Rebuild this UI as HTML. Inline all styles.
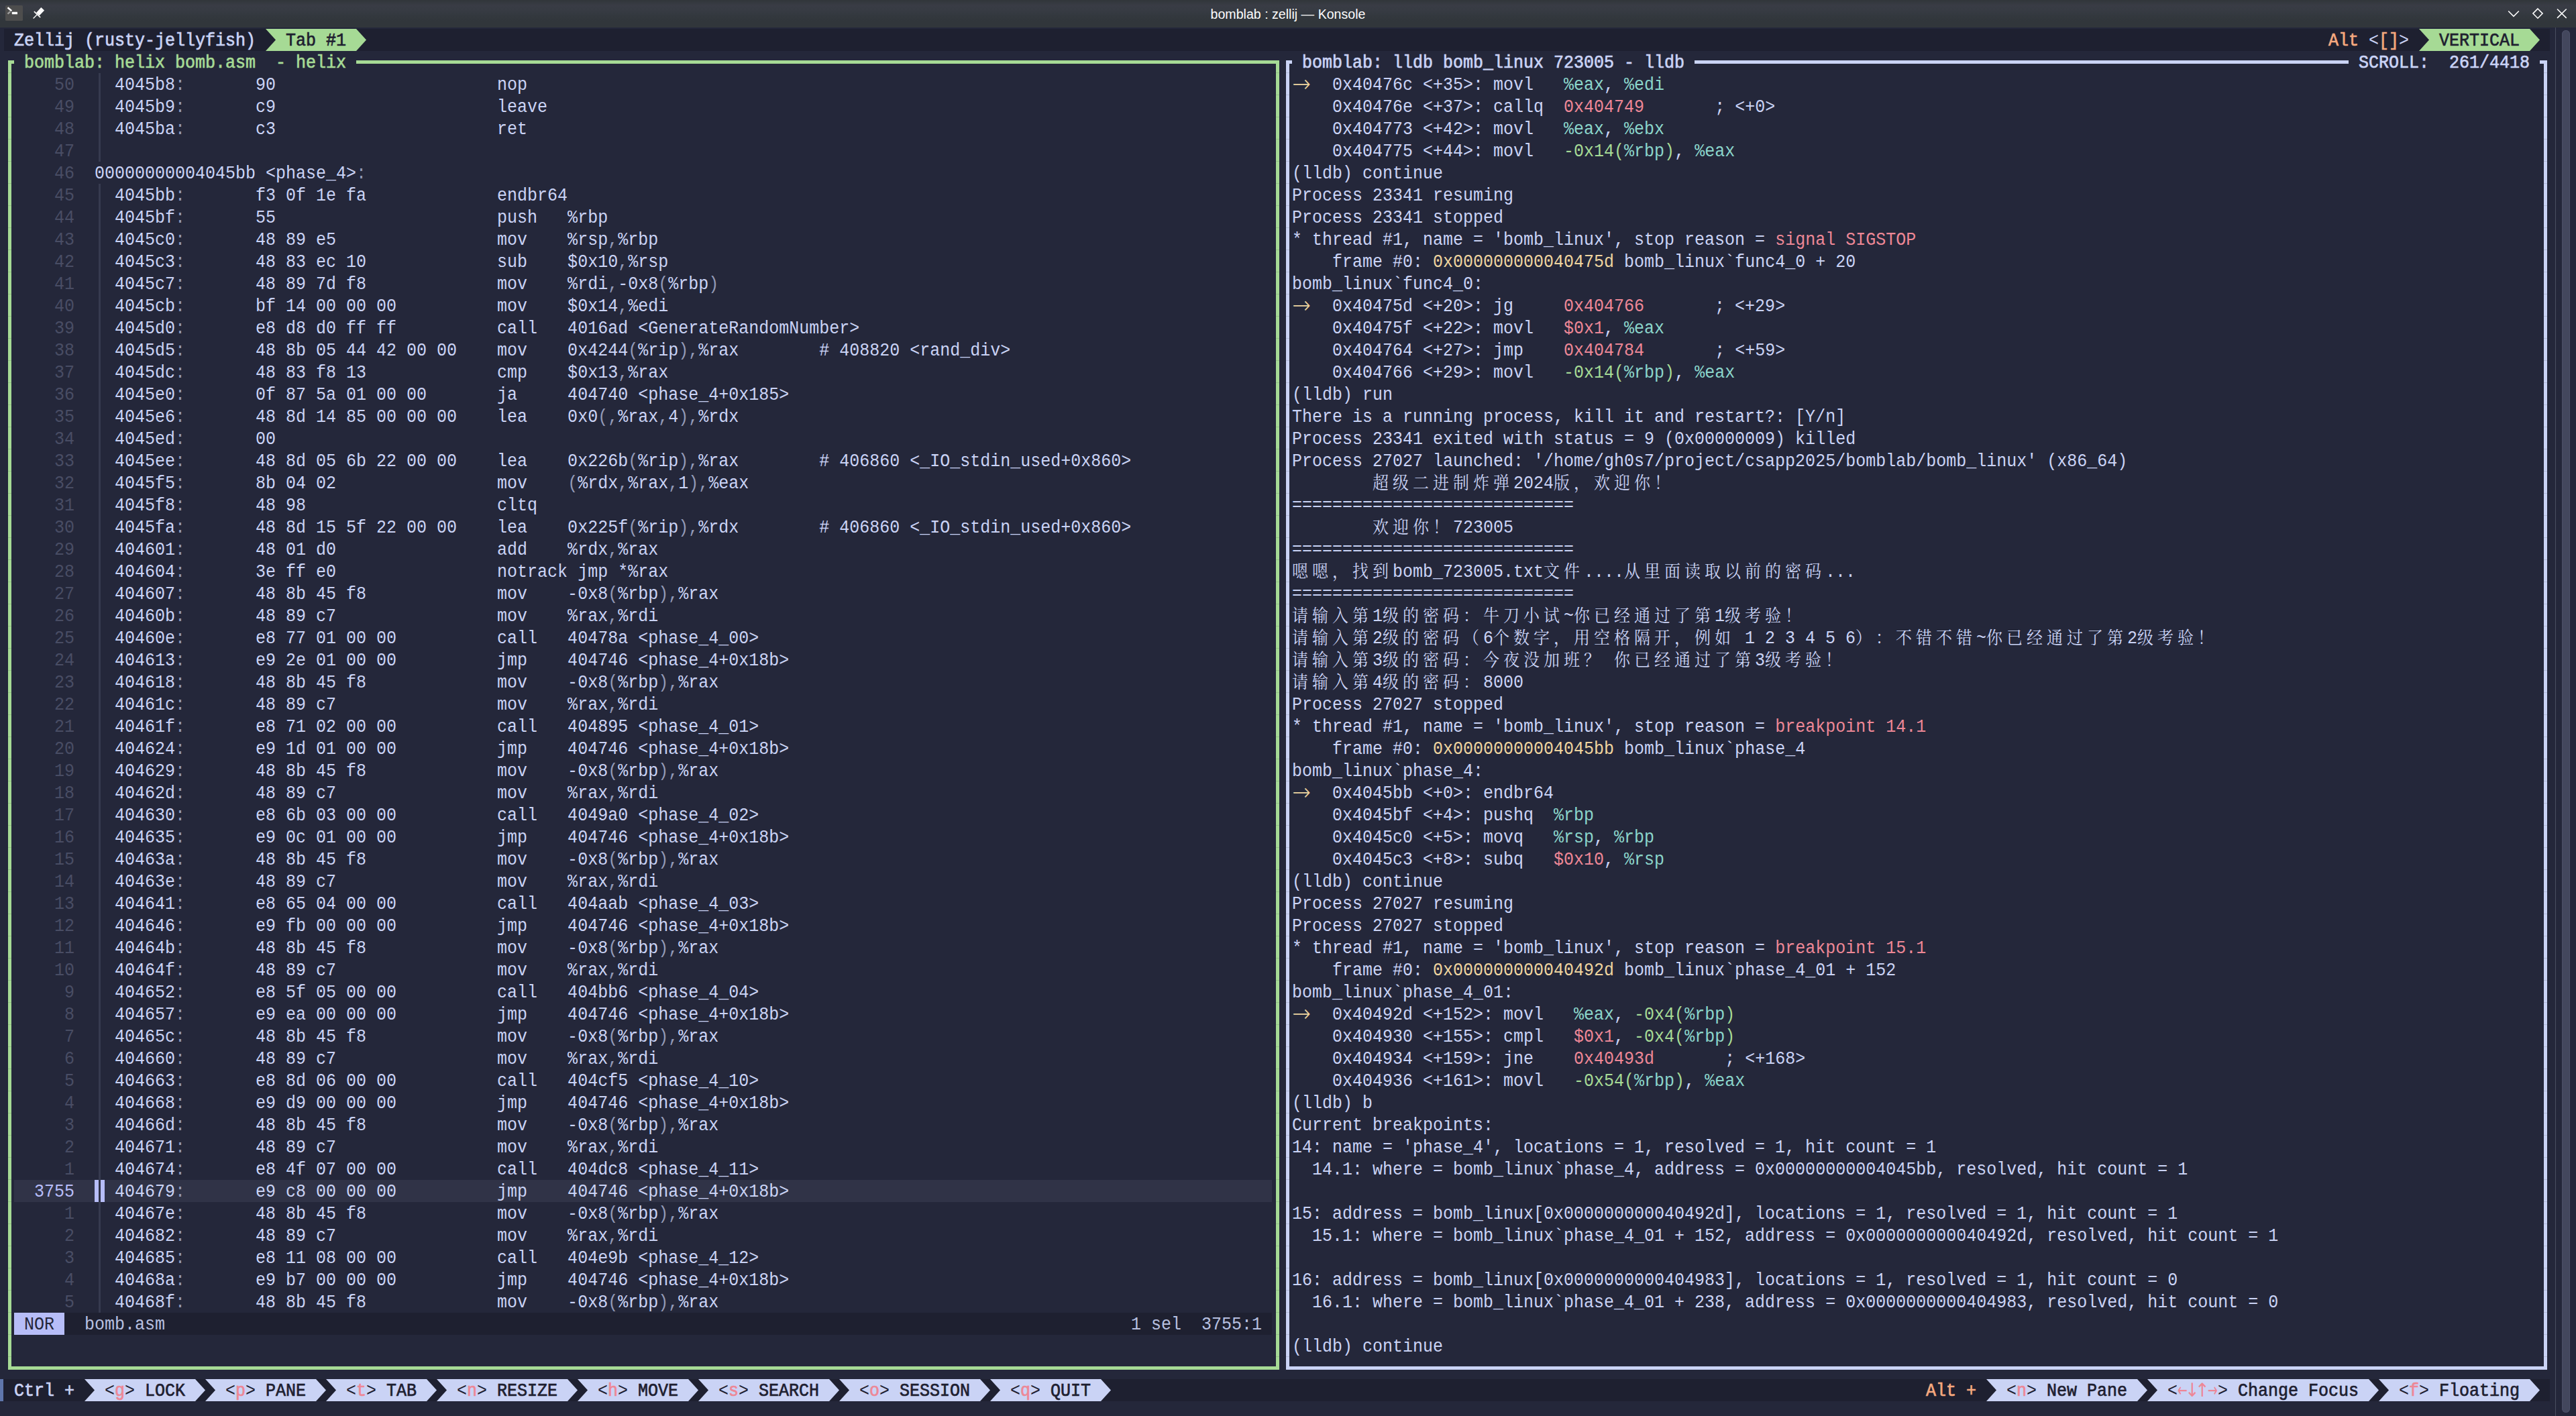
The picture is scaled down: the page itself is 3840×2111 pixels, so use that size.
<!DOCTYPE html>
<html lang="zh"><head><meta charset="utf-8"><title>bomblab : zellij — Konsole</title>
<style>
html,body{margin:0;padding:0;background:#24273a;}
body{width:3840px;height:2111px;overflow:hidden;position:relative;font-family:"Liberation Mono","Noto Serif CJK SC",monospace;}
#tb{position:absolute;left:0;top:0;width:3840px;height:41px;background:linear-gradient(#31363a 0,#393c45 8px,#373b43 16px,#33383e 24px,#31363b 31px,#31363b 100%);}
#tb svg{position:absolute;top:0}
#sep{position:absolute;left:3809px;top:41px;width:1px;height:2070px;background:#4a4e60}
#sb{position:absolute;left:3819px;top:45px;width:12px;height:2061px;border-radius:6px;background:#43475d;box-shadow:inset 0 0 0 1px #4c5068}
#mk{position:absolute;left:0;top:2056px;width:5px;height:33px;background:#5f76ab}
#tb .t{position:absolute;left:0;right:0;top:0;height:41px;line-height:41px;text-align:center;color:#fcfcfc;font:19.6px/43px "Liberation Sans",sans-serif;}
#term{position:absolute;left:6px;top:43px;width:3795px;height:2046px;color:#cad3f5;font-size:25px;}
.r{position:absolute;height:33px;line-height:33px;white-space:pre;transform:translateY(1px) scaleY(1.08);transform-origin:0 16.5px;}
.b{position:absolute;}
.B{font-weight:normal;-webkit-text-stroke:.65px currentColor}
.dk{color:#1e2030}.dk2{color:#24273a}
.gr{color:#a6da95}.g2{color:#a6da95}.re{color:#ed8796}.pe{color:#f5a97f}.ye{color:#eed49f}.te{color:#8bd5ca}
.ln{color:#494d64}.lnc{color:#b7bdf8}.pu{color:#939ab7}.st{color:#b8c0e0}
.ar{color:#eed49f;display:inline-block;width:30px;font:200 33px/33px "DejaVu Sans",sans-serif;vertical-align:top;text-align:center;position:relative;top:-2px;left:-1px}
.ah,.av{font-family:"DejaVu Sans",sans-serif;display:inline-block;width:15px;text-align:center;vertical-align:top;line-height:33px;font-weight:normal;text-indent:-4px}
.ah{font-size:26px;text-indent:-3.4px;transform:scaleX(.68);position:relative;top:-1px}.av{font-size:26px;position:relative;top:-1px}
i.w{display:inline-block;width:30px;font-style:normal;font-size:24px;text-align:left;line-height:33px;vertical-align:top;position:relative;top:1px;}
</style></head><body>
<div id="tb"><div class="t">bomblab : zellij — Konsole</div>
<svg style="left:0" width="90" height="41" viewBox="0 0 90 41">
<rect x="8" y="8" width="26" height="23" rx="1.5" fill="#4d4d4d"/>
<path d="M11.5 11.3 L17.3 16.3" stroke="#fcfcfc" stroke-width="2.5" fill="none"/>
<path d="M15.2 17.3 L11.5 20.7" stroke="#a0a0a0" stroke-width="2.3" fill="none"/>
<rect x="17.8" y="17.7" width="8.2" height="3.6" rx="0.5" fill="#fcfcfc"/>
<path d="M61.3 10.9 L66.1 15.4 L58.7 23.2 L54.0 18.9 Z" fill="#fcfcfc"/>
<path d="M50.9 17.2 L60.2 26.0" stroke="#fcfcfc" stroke-width="1.7" fill="none"/>
<path d="M55.5 21.6 L49.6 27.4" stroke="#fcfcfc" stroke-width="1.4" fill="none"/>
</svg>
<svg style="left:3730px" width="110" height="41" viewBox="3730 0 110 41" fill="none" stroke="#fcfcfc" stroke-width="1.6">
<path d="M3739.2 16.5 L3747 24.3 L3754.8 16.5"/>
<path d="M3783 13 L3790.1 20.1 L3783 27.2 L3775.9 20.1 Z"/>
<path d="M3812 13.5 L3825.7 26.9 M3825.7 13.5 L3812 26.9"/>
</svg>
</div>
<div id="sep"></div><div id="sb"></div><div id="mk"></div>
<div id="term">
<div class="b" style="left:0px;top:0px;width:3795px;height:33px;background:#1e2030;"></div>
<div class="r " style="top:0px;left:0px"><span class="B"> Zellij (rusty-jellyfish) </span></div>
<div class="b" style="left:390px;top:0px;width:15px;height:33px;background:#a6da95;"></div>
<div class="b" style="left:390px;top:0px;width:15px;height:33px;background:#1e2030;clip-path:polygon(0 0,100% 50%,0 100%)"></div>
<div class="b" style="left:405px;top:0px;width:120px;height:33px;background:#a6da95;"></div>
<div class="r " style="top:0px;left:405px"><span class="B dk"> Tab #1 </span></div>
<div class="b" style="left:525px;top:0px;width:15px;height:33px;background:#1e2030;"></div>
<div class="b" style="left:525px;top:0px;width:15px;height:33px;background:#a6da95;clip-path:polygon(0 0,100% 50%,0 100%)"></div>
<div class="r " style="top:0px;left:3465px"><span class="B pe">Alt</span> &lt;<span class="B pe">[]</span>&gt;</div>
<div class="b" style="left:3600px;top:0px;width:15px;height:33px;background:#a6da95;"></div>
<div class="b" style="left:3600px;top:0px;width:15px;height:33px;background:#1e2030;clip-path:polygon(0 0,100% 50%,0 100%)"></div>
<div class="b" style="left:3615px;top:0px;width:150px;height:33px;background:#a6da95;"></div>
<div class="r " style="top:0px;left:3615px"><span class="B dk"> VERTICAL </span></div>
<div class="b" style="left:3765px;top:0px;width:15px;height:33px;background:#1e2030;"></div>
<div class="b" style="left:3765px;top:0px;width:15px;height:33px;background:#a6da95;clip-path:polygon(0 0,100% 50%,0 100%)"></div>
<div class="b" style="left:6px;top:47px;width:5px;height:1952px;background:repeating-linear-gradient(to bottom,#a6da95 0,#a6da95 18px,#95c486 18px,#95c486 19px,#a6da95 19px,#a6da95 33px);"></div>
<div class="b" style="left:1896px;top:47px;width:5px;height:1952px;background:repeating-linear-gradient(to bottom,#a6da95 0,#a6da95 18px,#95c486 18px,#95c486 19px,#a6da95 19px,#a6da95 33px);"></div>
<div class="b" style="left:6px;top:47px;width:9px;height:5px;background:#a6da95;"></div>
<div class="b" style="left:525px;top:47px;width:1376px;height:5px;background:#a6da95;"></div>
<div class="b" style="left:6px;top:1994px;width:1895px;height:5px;background:#a6da95;"></div>
<div class="r " style="top:33px;left:30px"><span class="B gr">bomblab: helix bomb.asm  - helix</span></div>
<div class="b" style="left:1911px;top:47px;width:5px;height:1952px;background:repeating-linear-gradient(to bottom,#cad3f5 0,#cad3f5 18px,#b5bddc 18px,#b5bddc 19px,#cad3f5 19px,#cad3f5 33px);"></div>
<div class="b" style="left:3786px;top:47px;width:5px;height:1952px;background:repeating-linear-gradient(to bottom,#cad3f5 0,#cad3f5 18px,#b5bddc 18px,#b5bddc 19px,#cad3f5 19px,#cad3f5 33px);"></div>
<div class="b" style="left:1911px;top:47px;width:9px;height:5px;background:#cad3f5;"></div>
<div class="b" style="left:2520px;top:47px;width:975px;height:5px;background:#cad3f5;"></div>
<div class="b" style="left:3780px;top:47px;width:11px;height:5px;background:#cad3f5;"></div>
<div class="b" style="left:1911px;top:1994px;width:1880px;height:5px;background:#cad3f5;"></div>
<div class="r " style="top:33px;left:1935px"><span class="B">bomblab: lldb bomb_linux 723005 - lldb</span></div>
<div class="r " style="top:33px;left:3510px"><span class="B">SCROLL:  261/4418</span></div>
<div class="r " style="top:66px;left:75px"><span class="ln">50</span></div>
<div class="b" style="left:141px;top:66px;width:3px;height:33px;background:#363a4f;"></div>
<div class="r " style="top:66px;left:165px">4045b8<span class="pu">:</span>       90                      nop</div>
<div class="r " style="top:99px;left:75px"><span class="ln">49</span></div>
<div class="b" style="left:141px;top:99px;width:3px;height:33px;background:#363a4f;"></div>
<div class="r " style="top:99px;left:165px">4045b9<span class="pu">:</span>       c9                      leave</div>
<div class="r " style="top:132px;left:75px"><span class="ln">48</span></div>
<div class="b" style="left:141px;top:132px;width:3px;height:33px;background:#363a4f;"></div>
<div class="r " style="top:132px;left:165px">4045ba<span class="pu">:</span>       c3                      ret</div>
<div class="r " style="top:165px;left:75px"><span class="ln">47</span></div>
<div class="b" style="left:141px;top:165px;width:3px;height:33px;background:#363a4f;"></div>
<div class="r " style="top:198px;left:75px"><span class="ln">46</span></div>
<div class="r " style="top:198px;left:135px">00000000004045bb &lt;phase_4&gt;<span class="pu">:</span></div>
<div class="r " style="top:231px;left:75px"><span class="ln">45</span></div>
<div class="b" style="left:141px;top:231px;width:3px;height:33px;background:#363a4f;"></div>
<div class="r " style="top:231px;left:165px">4045bb<span class="pu">:</span>       f3 0f 1e fa             endbr64</div>
<div class="r " style="top:264px;left:75px"><span class="ln">44</span></div>
<div class="b" style="left:141px;top:264px;width:3px;height:33px;background:#363a4f;"></div>
<div class="r " style="top:264px;left:165px">4045bf<span class="pu">:</span>       55                      push   %rbp</div>
<div class="r " style="top:297px;left:75px"><span class="ln">43</span></div>
<div class="b" style="left:141px;top:297px;width:3px;height:33px;background:#363a4f;"></div>
<div class="r " style="top:297px;left:165px">4045c0<span class="pu">:</span>       48 89 e5                mov    %rsp<span class="pu">,</span>%rbp</div>
<div class="r " style="top:330px;left:75px"><span class="ln">42</span></div>
<div class="b" style="left:141px;top:330px;width:3px;height:33px;background:#363a4f;"></div>
<div class="r " style="top:330px;left:165px">4045c3<span class="pu">:</span>       48 83 ec 10             sub    $0x10<span class="pu">,</span>%rsp</div>
<div class="r " style="top:363px;left:75px"><span class="ln">41</span></div>
<div class="b" style="left:141px;top:363px;width:3px;height:33px;background:#363a4f;"></div>
<div class="r " style="top:363px;left:165px">4045c7<span class="pu">:</span>       48 89 7d f8             mov    %rdi<span class="pu">,</span>-0x8<span class="pu">(</span>%rbp<span class="pu">)</span></div>
<div class="r " style="top:396px;left:75px"><span class="ln">40</span></div>
<div class="b" style="left:141px;top:396px;width:3px;height:33px;background:#363a4f;"></div>
<div class="r " style="top:396px;left:165px">4045cb<span class="pu">:</span>       bf 14 00 00 00          mov    $0x14<span class="pu">,</span>%edi</div>
<div class="r " style="top:429px;left:75px"><span class="ln">39</span></div>
<div class="b" style="left:141px;top:429px;width:3px;height:33px;background:#363a4f;"></div>
<div class="r " style="top:429px;left:165px">4045d0<span class="pu">:</span>       e8 d8 d0 ff ff          call   4016ad &lt;GenerateRandomNumber&gt;</div>
<div class="r " style="top:462px;left:75px"><span class="ln">38</span></div>
<div class="b" style="left:141px;top:462px;width:3px;height:33px;background:#363a4f;"></div>
<div class="r " style="top:462px;left:165px">4045d5<span class="pu">:</span>       48 8b 05 44 42 00 00    mov    0x4244<span class="pu">(</span>%rip<span class="pu">)</span><span class="pu">,</span>%rax        # 408820 &lt;rand_div&gt;</div>
<div class="r " style="top:495px;left:75px"><span class="ln">37</span></div>
<div class="b" style="left:141px;top:495px;width:3px;height:33px;background:#363a4f;"></div>
<div class="r " style="top:495px;left:165px">4045dc<span class="pu">:</span>       48 83 f8 13             cmp    $0x13<span class="pu">,</span>%rax</div>
<div class="r " style="top:528px;left:75px"><span class="ln">36</span></div>
<div class="b" style="left:141px;top:528px;width:3px;height:33px;background:#363a4f;"></div>
<div class="r " style="top:528px;left:165px">4045e0<span class="pu">:</span>       0f 87 5a 01 00 00       ja     404740 &lt;phase_4+0x185&gt;</div>
<div class="r " style="top:561px;left:75px"><span class="ln">35</span></div>
<div class="b" style="left:141px;top:561px;width:3px;height:33px;background:#363a4f;"></div>
<div class="r " style="top:561px;left:165px">4045e6<span class="pu">:</span>       48 8d 14 85 00 00 00    lea    0x0<span class="pu">(</span><span class="pu">,</span>%rax<span class="pu">,</span>4<span class="pu">)</span><span class="pu">,</span>%rdx</div>
<div class="r " style="top:594px;left:75px"><span class="ln">34</span></div>
<div class="b" style="left:141px;top:594px;width:3px;height:33px;background:#363a4f;"></div>
<div class="r " style="top:594px;left:165px">4045ed<span class="pu">:</span>       00</div>
<div class="r " style="top:627px;left:75px"><span class="ln">33</span></div>
<div class="b" style="left:141px;top:627px;width:3px;height:33px;background:#363a4f;"></div>
<div class="r " style="top:627px;left:165px">4045ee<span class="pu">:</span>       48 8d 05 6b 22 00 00    lea    0x226b<span class="pu">(</span>%rip<span class="pu">)</span><span class="pu">,</span>%rax        # 406860 &lt;_IO_stdin_used+0x860&gt;</div>
<div class="r " style="top:660px;left:75px"><span class="ln">32</span></div>
<div class="b" style="left:141px;top:660px;width:3px;height:33px;background:#363a4f;"></div>
<div class="r " style="top:660px;left:165px">4045f5<span class="pu">:</span>       8b 04 02                mov    <span class="pu">(</span>%rdx<span class="pu">,</span>%rax<span class="pu">,</span>1<span class="pu">)</span><span class="pu">,</span>%eax</div>
<div class="r " style="top:693px;left:75px"><span class="ln">31</span></div>
<div class="b" style="left:141px;top:693px;width:3px;height:33px;background:#363a4f;"></div>
<div class="r " style="top:693px;left:165px">4045f8<span class="pu">:</span>       48 98                   cltq</div>
<div class="r " style="top:726px;left:75px"><span class="ln">30</span></div>
<div class="b" style="left:141px;top:726px;width:3px;height:33px;background:#363a4f;"></div>
<div class="r " style="top:726px;left:165px">4045fa<span class="pu">:</span>       48 8d 15 5f 22 00 00    lea    0x225f<span class="pu">(</span>%rip<span class="pu">)</span><span class="pu">,</span>%rdx        # 406860 &lt;_IO_stdin_used+0x860&gt;</div>
<div class="r " style="top:759px;left:75px"><span class="ln">29</span></div>
<div class="b" style="left:141px;top:759px;width:3px;height:33px;background:#363a4f;"></div>
<div class="r " style="top:759px;left:165px">404601<span class="pu">:</span>       48 01 d0                add    %rdx<span class="pu">,</span>%rax</div>
<div class="r " style="top:792px;left:75px"><span class="ln">28</span></div>
<div class="b" style="left:141px;top:792px;width:3px;height:33px;background:#363a4f;"></div>
<div class="r " style="top:792px;left:165px">404604<span class="pu">:</span>       3e ff e0                notrack jmp *%rax</div>
<div class="r " style="top:825px;left:75px"><span class="ln">27</span></div>
<div class="b" style="left:141px;top:825px;width:3px;height:33px;background:#363a4f;"></div>
<div class="r " style="top:825px;left:165px">404607<span class="pu">:</span>       48 8b 45 f8             mov    -0x8<span class="pu">(</span>%rbp<span class="pu">)</span><span class="pu">,</span>%rax</div>
<div class="r " style="top:858px;left:75px"><span class="ln">26</span></div>
<div class="b" style="left:141px;top:858px;width:3px;height:33px;background:#363a4f;"></div>
<div class="r " style="top:858px;left:165px">40460b<span class="pu">:</span>       48 89 c7                mov    %rax<span class="pu">,</span>%rdi</div>
<div class="r " style="top:891px;left:75px"><span class="ln">25</span></div>
<div class="b" style="left:141px;top:891px;width:3px;height:33px;background:#363a4f;"></div>
<div class="r " style="top:891px;left:165px">40460e<span class="pu">:</span>       e8 77 01 00 00          call   40478a &lt;phase_4_00&gt;</div>
<div class="r " style="top:924px;left:75px"><span class="ln">24</span></div>
<div class="b" style="left:141px;top:924px;width:3px;height:33px;background:#363a4f;"></div>
<div class="r " style="top:924px;left:165px">404613<span class="pu">:</span>       e9 2e 01 00 00          jmp    404746 &lt;phase_4+0x18b&gt;</div>
<div class="r " style="top:957px;left:75px"><span class="ln">23</span></div>
<div class="b" style="left:141px;top:957px;width:3px;height:33px;background:#363a4f;"></div>
<div class="r " style="top:957px;left:165px">404618<span class="pu">:</span>       48 8b 45 f8             mov    -0x8<span class="pu">(</span>%rbp<span class="pu">)</span><span class="pu">,</span>%rax</div>
<div class="r " style="top:990px;left:75px"><span class="ln">22</span></div>
<div class="b" style="left:141px;top:990px;width:3px;height:33px;background:#363a4f;"></div>
<div class="r " style="top:990px;left:165px">40461c<span class="pu">:</span>       48 89 c7                mov    %rax<span class="pu">,</span>%rdi</div>
<div class="r " style="top:1023px;left:75px"><span class="ln">21</span></div>
<div class="b" style="left:141px;top:1023px;width:3px;height:33px;background:#363a4f;"></div>
<div class="r " style="top:1023px;left:165px">40461f<span class="pu">:</span>       e8 71 02 00 00          call   404895 &lt;phase_4_01&gt;</div>
<div class="r " style="top:1056px;left:75px"><span class="ln">20</span></div>
<div class="b" style="left:141px;top:1056px;width:3px;height:33px;background:#363a4f;"></div>
<div class="r " style="top:1056px;left:165px">404624<span class="pu">:</span>       e9 1d 01 00 00          jmp    404746 &lt;phase_4+0x18b&gt;</div>
<div class="r " style="top:1089px;left:75px"><span class="ln">19</span></div>
<div class="b" style="left:141px;top:1089px;width:3px;height:33px;background:#363a4f;"></div>
<div class="r " style="top:1089px;left:165px">404629<span class="pu">:</span>       48 8b 45 f8             mov    -0x8<span class="pu">(</span>%rbp<span class="pu">)</span><span class="pu">,</span>%rax</div>
<div class="r " style="top:1122px;left:75px"><span class="ln">18</span></div>
<div class="b" style="left:141px;top:1122px;width:3px;height:33px;background:#363a4f;"></div>
<div class="r " style="top:1122px;left:165px">40462d<span class="pu">:</span>       48 89 c7                mov    %rax<span class="pu">,</span>%rdi</div>
<div class="r " style="top:1155px;left:75px"><span class="ln">17</span></div>
<div class="b" style="left:141px;top:1155px;width:3px;height:33px;background:#363a4f;"></div>
<div class="r " style="top:1155px;left:165px">404630<span class="pu">:</span>       e8 6b 03 00 00          call   4049a0 &lt;phase_4_02&gt;</div>
<div class="r " style="top:1188px;left:75px"><span class="ln">16</span></div>
<div class="b" style="left:141px;top:1188px;width:3px;height:33px;background:#363a4f;"></div>
<div class="r " style="top:1188px;left:165px">404635<span class="pu">:</span>       e9 0c 01 00 00          jmp    404746 &lt;phase_4+0x18b&gt;</div>
<div class="r " style="top:1221px;left:75px"><span class="ln">15</span></div>
<div class="b" style="left:141px;top:1221px;width:3px;height:33px;background:#363a4f;"></div>
<div class="r " style="top:1221px;left:165px">40463a<span class="pu">:</span>       48 8b 45 f8             mov    -0x8<span class="pu">(</span>%rbp<span class="pu">)</span><span class="pu">,</span>%rax</div>
<div class="r " style="top:1254px;left:75px"><span class="ln">14</span></div>
<div class="b" style="left:141px;top:1254px;width:3px;height:33px;background:#363a4f;"></div>
<div class="r " style="top:1254px;left:165px">40463e<span class="pu">:</span>       48 89 c7                mov    %rax<span class="pu">,</span>%rdi</div>
<div class="r " style="top:1287px;left:75px"><span class="ln">13</span></div>
<div class="b" style="left:141px;top:1287px;width:3px;height:33px;background:#363a4f;"></div>
<div class="r " style="top:1287px;left:165px">404641<span class="pu">:</span>       e8 65 04 00 00          call   404aab &lt;phase_4_03&gt;</div>
<div class="r " style="top:1320px;left:75px"><span class="ln">12</span></div>
<div class="b" style="left:141px;top:1320px;width:3px;height:33px;background:#363a4f;"></div>
<div class="r " style="top:1320px;left:165px">404646<span class="pu">:</span>       e9 fb 00 00 00          jmp    404746 &lt;phase_4+0x18b&gt;</div>
<div class="r " style="top:1353px;left:75px"><span class="ln">11</span></div>
<div class="b" style="left:141px;top:1353px;width:3px;height:33px;background:#363a4f;"></div>
<div class="r " style="top:1353px;left:165px">40464b<span class="pu">:</span>       48 8b 45 f8             mov    -0x8<span class="pu">(</span>%rbp<span class="pu">)</span><span class="pu">,</span>%rax</div>
<div class="r " style="top:1386px;left:75px"><span class="ln">10</span></div>
<div class="b" style="left:141px;top:1386px;width:3px;height:33px;background:#363a4f;"></div>
<div class="r " style="top:1386px;left:165px">40464f<span class="pu">:</span>       48 89 c7                mov    %rax<span class="pu">,</span>%rdi</div>
<div class="r " style="top:1419px;left:90px"><span class="ln">9</span></div>
<div class="b" style="left:141px;top:1419px;width:3px;height:33px;background:#363a4f;"></div>
<div class="r " style="top:1419px;left:165px">404652<span class="pu">:</span>       e8 5f 05 00 00          call   404bb6 &lt;phase_4_04&gt;</div>
<div class="r " style="top:1452px;left:90px"><span class="ln">8</span></div>
<div class="b" style="left:141px;top:1452px;width:3px;height:33px;background:#363a4f;"></div>
<div class="r " style="top:1452px;left:165px">404657<span class="pu">:</span>       e9 ea 00 00 00          jmp    404746 &lt;phase_4+0x18b&gt;</div>
<div class="r " style="top:1485px;left:90px"><span class="ln">7</span></div>
<div class="b" style="left:141px;top:1485px;width:3px;height:33px;background:#363a4f;"></div>
<div class="r " style="top:1485px;left:165px">40465c<span class="pu">:</span>       48 8b 45 f8             mov    -0x8<span class="pu">(</span>%rbp<span class="pu">)</span><span class="pu">,</span>%rax</div>
<div class="r " style="top:1518px;left:90px"><span class="ln">6</span></div>
<div class="b" style="left:141px;top:1518px;width:3px;height:33px;background:#363a4f;"></div>
<div class="r " style="top:1518px;left:165px">404660<span class="pu">:</span>       48 89 c7                mov    %rax<span class="pu">,</span>%rdi</div>
<div class="r " style="top:1551px;left:90px"><span class="ln">5</span></div>
<div class="b" style="left:141px;top:1551px;width:3px;height:33px;background:#363a4f;"></div>
<div class="r " style="top:1551px;left:165px">404663<span class="pu">:</span>       e8 8d 06 00 00          call   404cf5 &lt;phase_4_10&gt;</div>
<div class="r " style="top:1584px;left:90px"><span class="ln">4</span></div>
<div class="b" style="left:141px;top:1584px;width:3px;height:33px;background:#363a4f;"></div>
<div class="r " style="top:1584px;left:165px">404668<span class="pu">:</span>       e9 d9 00 00 00          jmp    404746 &lt;phase_4+0x18b&gt;</div>
<div class="r " style="top:1617px;left:90px"><span class="ln">3</span></div>
<div class="b" style="left:141px;top:1617px;width:3px;height:33px;background:#363a4f;"></div>
<div class="r " style="top:1617px;left:165px">40466d<span class="pu">:</span>       48 8b 45 f8             mov    -0x8<span class="pu">(</span>%rbp<span class="pu">)</span><span class="pu">,</span>%rax</div>
<div class="r " style="top:1650px;left:90px"><span class="ln">2</span></div>
<div class="b" style="left:141px;top:1650px;width:3px;height:33px;background:#363a4f;"></div>
<div class="r " style="top:1650px;left:165px">404671<span class="pu">:</span>       48 89 c7                mov    %rax<span class="pu">,</span>%rdi</div>
<div class="r " style="top:1683px;left:90px"><span class="ln">1</span></div>
<div class="b" style="left:141px;top:1683px;width:3px;height:33px;background:#363a4f;"></div>
<div class="r " style="top:1683px;left:165px">404674<span class="pu">:</span>       e8 4f 07 00 00          call   404dc8 &lt;phase_4_11&gt;</div>
<div class="b" style="left:15px;top:1716px;width:1875px;height:33px;background:#303347;"></div>
<div class="b" style="left:135px;top:1716px;width:15px;height:33px;background:#b7bdf8;"></div>
<div class="r " style="top:1716px;left:45px"><span class="lnc">3755</span></div>
<div class="b" style="left:141px;top:1716px;width:3px;height:33px;background:#303347;"></div>
<div class="r " style="top:1716px;left:165px">404679<span class="pu">:</span>       e9 c8 00 00 00          jmp    404746 &lt;phase_4+0x18b&gt;</div>
<div class="r " style="top:1749px;left:90px"><span class="ln">1</span></div>
<div class="b" style="left:141px;top:1749px;width:3px;height:33px;background:#363a4f;"></div>
<div class="r " style="top:1749px;left:165px">40467e<span class="pu">:</span>       48 8b 45 f8             mov    -0x8<span class="pu">(</span>%rbp<span class="pu">)</span><span class="pu">,</span>%rax</div>
<div class="r " style="top:1782px;left:90px"><span class="ln">2</span></div>
<div class="b" style="left:141px;top:1782px;width:3px;height:33px;background:#363a4f;"></div>
<div class="r " style="top:1782px;left:165px">404682<span class="pu">:</span>       48 89 c7                mov    %rax<span class="pu">,</span>%rdi</div>
<div class="r " style="top:1815px;left:90px"><span class="ln">3</span></div>
<div class="b" style="left:141px;top:1815px;width:3px;height:33px;background:#363a4f;"></div>
<div class="r " style="top:1815px;left:165px">404685<span class="pu">:</span>       e8 11 08 00 00          call   404e9b &lt;phase_4_12&gt;</div>
<div class="r " style="top:1848px;left:90px"><span class="ln">4</span></div>
<div class="b" style="left:141px;top:1848px;width:3px;height:33px;background:#363a4f;"></div>
<div class="r " style="top:1848px;left:165px">40468a<span class="pu">:</span>       e9 b7 00 00 00          jmp    404746 &lt;phase_4+0x18b&gt;</div>
<div class="r " style="top:1881px;left:90px"><span class="ln">5</span></div>
<div class="b" style="left:141px;top:1881px;width:3px;height:33px;background:#363a4f;"></div>
<div class="r " style="top:1881px;left:165px">40468f<span class="pu">:</span>       48 8b 45 f8             mov    -0x8<span class="pu">(</span>%rbp<span class="pu">)</span><span class="pu">,</span>%rax</div>
<div class="b" style="left:15px;top:1914px;width:1875px;height:33px;background:#1e2030;"></div>
<div class="b" style="left:15px;top:1914px;width:75px;height:33px;background:#b7bdf8;"></div>
<div class="r " style="top:1914px;left:15px"><span class="dk2"> NOR </span></div>
<div class="r " style="top:1914px;left:120px"><span class="st">bomb.asm</span></div>
<div class="r " style="top:1914px;left:1680px"><span class="st">1 sel  3755:1</span></div>
<div class="r " style="top:66px;left:1920px"><span class="ar">→</span>  0x40476c &lt;+35&gt;: movl   <span class="te">%eax</span>, <span class="te">%edi</span></div>
<div class="r " style="top:99px;left:1920px">    0x40476e &lt;+37&gt;: callq  <span class="re">0x404749</span>       ; &lt;+0&gt;</div>
<div class="r " style="top:132px;left:1920px">    0x404773 &lt;+42&gt;: movl   <span class="te">%eax</span>, <span class="te">%ebx</span></div>
<div class="r " style="top:165px;left:1920px">    0x404775 &lt;+44&gt;: movl   <span class="g2">-0x14(</span><span class="te">%rbp</span><span class="g2">)</span>, <span class="te">%eax</span></div>
<div class="r " style="top:198px;left:1920px">(lldb) continue</div>
<div class="r " style="top:231px;left:1920px">Process 23341 resuming</div>
<div class="r " style="top:264px;left:1920px">Process 23341 stopped</div>
<div class="r " style="top:297px;left:1920px">* thread #1, name = 'bomb_linux', stop reason = <span class="re">signal SIGSTOP</span></div>
<div class="r " style="top:330px;left:1920px">    frame #0: <span class="ye">0x000000000040475d</span> bomb_linux`func4_0 + 20</div>
<div class="r " style="top:363px;left:1920px">bomb_linux`func4_0:</div>
<div class="r " style="top:396px;left:1920px"><span class="ar">→</span>  0x40475d &lt;+20&gt;: jg     <span class="re">0x404766</span>       ; &lt;+29&gt;</div>
<div class="r " style="top:429px;left:1920px">    0x40475f &lt;+22&gt;: movl   <span class="re">$0x1</span>, <span class="te">%eax</span></div>
<div class="r " style="top:462px;left:1920px">    0x404764 &lt;+27&gt;: jmp    <span class="re">0x404784</span>       ; &lt;+59&gt;</div>
<div class="r " style="top:495px;left:1920px">    0x404766 &lt;+29&gt;: movl   <span class="g2">-0x14(</span><span class="te">%rbp</span><span class="g2">)</span>, <span class="te">%eax</span></div>
<div class="r " style="top:528px;left:1920px">(lldb) run</div>
<div class="r " style="top:561px;left:1920px">There is a running process, kill it and restart?: [Y/n] </div>
<div class="r " style="top:594px;left:1920px">Process 23341 exited with status = 9 (0x00000009) killed</div>
<div class="r " style="top:627px;left:1920px">Process 27027 launched: '/home/gh0s7/project/csapp2025/bomblab/bomb_linux' (x86_64)</div>
<div class="r " style="top:660px;left:1920px">        <i class="w">超</i><i class="w">级</i><i class="w">二</i><i class="w">进</i><i class="w">制</i><i class="w">炸</i><i class="w">弹</i>2024<i class="w">版</i><i class="w">，</i><i class="w">欢</i><i class="w">迎</i><i class="w">你</i><i class="w">！</i></div>
<div class="r " style="top:693px;left:1920px">============================</div>
<div class="r " style="top:726px;left:1920px">        <i class="w">欢</i><i class="w">迎</i><i class="w">你</i><i class="w">！</i>723005</div>
<div class="r " style="top:759px;left:1920px">============================</div>
<div class="r " style="top:792px;left:1920px"><i class="w">嗯</i><i class="w">嗯</i><i class="w">，</i><i class="w">找</i><i class="w">到</i>bomb_723005.txt<i class="w">文</i><i class="w">件</i>....<i class="w">从</i><i class="w">里</i><i class="w">面</i><i class="w">读</i><i class="w">取</i><i class="w">以</i><i class="w">前</i><i class="w">的</i><i class="w">密</i><i class="w">码</i>...</div>
<div class="r " style="top:825px;left:1920px">============================</div>
<div class="r " style="top:858px;left:1920px"><i class="w">请</i><i class="w">输</i><i class="w">入</i><i class="w">第</i>1<i class="w">级</i><i class="w">的</i><i class="w">密</i><i class="w">码</i><i class="w">：</i><i class="w">牛</i><i class="w">刀</i><i class="w">小</i><i class="w">试</i>~<i class="w">你</i><i class="w">已</i><i class="w">经</i><i class="w">通</i><i class="w">过</i><i class="w">了</i><i class="w">第</i>1<i class="w">级</i><i class="w">考</i><i class="w">验</i><i class="w">！</i></div>
<div class="r " style="top:891px;left:1920px"><i class="w">请</i><i class="w">输</i><i class="w">入</i><i class="w">第</i>2<i class="w">级</i><i class="w">的</i><i class="w">密</i><i class="w">码</i><i class="w">（</i>6<i class="w">个</i><i class="w">数</i><i class="w">字</i><i class="w">，</i><i class="w">用</i><i class="w">空</i><i class="w">格</i><i class="w">隔</i><i class="w">开</i><i class="w">，</i><i class="w">例</i><i class="w">如</i> 1 2 3 4 5 6<i class="w">）</i><i class="w">：</i><i class="w">不</i><i class="w">错</i><i class="w">不</i><i class="w">错</i>~<i class="w">你</i><i class="w">已</i><i class="w">经</i><i class="w">通</i><i class="w">过</i><i class="w">了</i><i class="w">第</i>2<i class="w">级</i><i class="w">考</i><i class="w">验</i><i class="w">！</i></div>
<div class="r " style="top:924px;left:1920px"><i class="w">请</i><i class="w">输</i><i class="w">入</i><i class="w">第</i>3<i class="w">级</i><i class="w">的</i><i class="w">密</i><i class="w">码</i><i class="w">：</i><i class="w">今</i><i class="w">夜</i><i class="w">没</i><i class="w">加</i><i class="w">班</i><i class="w">？</i> <i class="w">你</i><i class="w">已</i><i class="w">经</i><i class="w">通</i><i class="w">过</i><i class="w">了</i><i class="w">第</i>3<i class="w">级</i><i class="w">考</i><i class="w">验</i><i class="w">！</i></div>
<div class="r " style="top:957px;left:1920px"><i class="w">请</i><i class="w">输</i><i class="w">入</i><i class="w">第</i>4<i class="w">级</i><i class="w">的</i><i class="w">密</i><i class="w">码</i><i class="w">：</i>8000</div>
<div class="r " style="top:990px;left:1920px">Process 27027 stopped</div>
<div class="r " style="top:1023px;left:1920px">* thread #1, name = 'bomb_linux', stop reason = <span class="re">breakpoint 14.1</span></div>
<div class="r " style="top:1056px;left:1920px">    frame #0: <span class="ye">0x00000000004045bb</span> bomb_linux`phase_4</div>
<div class="r " style="top:1089px;left:1920px">bomb_linux`phase_4:</div>
<div class="r " style="top:1122px;left:1920px"><span class="ar">→</span>  0x4045bb &lt;+0&gt;: endbr64</div>
<div class="r " style="top:1155px;left:1920px">    0x4045bf &lt;+4&gt;: pushq  <span class="te">%rbp</span></div>
<div class="r " style="top:1188px;left:1920px">    0x4045c0 &lt;+5&gt;: movq   <span class="te">%rsp</span>, <span class="te">%rbp</span></div>
<div class="r " style="top:1221px;left:1920px">    0x4045c3 &lt;+8&gt;: subq   <span class="re">$0x10</span>, <span class="te">%rsp</span></div>
<div class="r " style="top:1254px;left:1920px">(lldb) continue</div>
<div class="r " style="top:1287px;left:1920px">Process 27027 resuming</div>
<div class="r " style="top:1320px;left:1920px">Process 27027 stopped</div>
<div class="r " style="top:1353px;left:1920px">* thread #1, name = 'bomb_linux', stop reason = <span class="re">breakpoint 15.1</span></div>
<div class="r " style="top:1386px;left:1920px">    frame #0: <span class="ye">0x000000000040492d</span> bomb_linux`phase_4_01 + 152</div>
<div class="r " style="top:1419px;left:1920px">bomb_linux`phase_4_01:</div>
<div class="r " style="top:1452px;left:1920px"><span class="ar">→</span>  0x40492d &lt;+152&gt;: movl   <span class="te">%eax</span>, <span class="g2">-0x4(</span><span class="te">%rbp</span><span class="g2">)</span></div>
<div class="r " style="top:1485px;left:1920px">    0x404930 &lt;+155&gt;: cmpl   <span class="re">$0x1</span>, <span class="g2">-0x4(</span><span class="te">%rbp</span><span class="g2">)</span></div>
<div class="r " style="top:1518px;left:1920px">    0x404934 &lt;+159&gt;: jne    <span class="re">0x40493d</span>       ; &lt;+168&gt;</div>
<div class="r " style="top:1551px;left:1920px">    0x404936 &lt;+161&gt;: movl   <span class="g2">-0x54(</span><span class="te">%rbp</span><span class="g2">)</span>, <span class="te">%eax</span></div>
<div class="r " style="top:1584px;left:1920px">(lldb) b</div>
<div class="r " style="top:1617px;left:1920px">Current breakpoints:</div>
<div class="r " style="top:1650px;left:1920px">14: name = 'phase_4', locations = 1, resolved = 1, hit count = 1</div>
<div class="r " style="top:1683px;left:1920px">  14.1: where = bomb_linux`phase_4, address = 0x00000000004045bb, resolved, hit count = 1 </div>
<div class="r " style="top:1749px;left:1920px">15: address = bomb_linux[0x000000000040492d], locations = 1, resolved = 1, hit count = 1</div>
<div class="r " style="top:1782px;left:1920px">  15.1: where = bomb_linux`phase_4_01 + 152, address = 0x000000000040492d, resolved, hit count = 1 </div>
<div class="r " style="top:1848px;left:1920px">16: address = bomb_linux[0x0000000000404983], locations = 1, resolved = 1, hit count = 0</div>
<div class="r " style="top:1881px;left:1920px">  16.1: where = bomb_linux`phase_4_01 + 238, address = 0x0000000000404983, resolved, hit count = 0 </div>
<div class="r " style="top:1947px;left:1920px">(lldb) continue</div>
<div class="b" style="left:0px;top:2013px;width:3795px;height:33px;background:#1e2030;"></div>
<div class="b" style="left:-1px;top:2013px;width:1px;height:33px;background:#1e2030;"></div>
<div class="r " style="top:2013px;left:0px"><span class="B"> Ctrl + </span></div>
<div class="b" style="left:120px;top:2013px;width:15px;height:33px;background:#cad3f5;"></div>
<div class="b" style="left:120px;top:2013px;width:15px;height:33px;background:#1e2030;clip-path:polygon(0 0,100% 50%,0 100%)"></div>
<div class="b" style="left:135px;top:2013px;width:150px;height:33px;background:#cad3f5;"></div>
<div class="r " style="top:2013px;left:135px"><span class="dk"> &lt;</span><span class="B re">g</span><span class="dk">&gt;</span><span class="B dk"> LOCK </span></div>
<div class="b" style="left:285px;top:2013px;width:15px;height:33px;background:#1e2030;"></div>
<div class="b" style="left:285px;top:2013px;width:15px;height:33px;background:#cad3f5;clip-path:polygon(0 0,100% 50%,0 100%)"></div>
<div class="b" style="left:300px;top:2013px;width:15px;height:33px;background:#cad3f5;"></div>
<div class="b" style="left:300px;top:2013px;width:15px;height:33px;background:#1e2030;clip-path:polygon(0 0,100% 50%,0 100%)"></div>
<div class="b" style="left:315px;top:2013px;width:150px;height:33px;background:#cad3f5;"></div>
<div class="r " style="top:2013px;left:315px"><span class="dk"> &lt;</span><span class="B re">p</span><span class="dk">&gt;</span><span class="B dk"> PANE </span></div>
<div class="b" style="left:465px;top:2013px;width:15px;height:33px;background:#1e2030;"></div>
<div class="b" style="left:465px;top:2013px;width:15px;height:33px;background:#cad3f5;clip-path:polygon(0 0,100% 50%,0 100%)"></div>
<div class="b" style="left:480px;top:2013px;width:15px;height:33px;background:#cad3f5;"></div>
<div class="b" style="left:480px;top:2013px;width:15px;height:33px;background:#1e2030;clip-path:polygon(0 0,100% 50%,0 100%)"></div>
<div class="b" style="left:495px;top:2013px;width:135px;height:33px;background:#cad3f5;"></div>
<div class="r " style="top:2013px;left:495px"><span class="dk"> &lt;</span><span class="B re">t</span><span class="dk">&gt;</span><span class="B dk"> TAB </span></div>
<div class="b" style="left:630px;top:2013px;width:15px;height:33px;background:#1e2030;"></div>
<div class="b" style="left:630px;top:2013px;width:15px;height:33px;background:#cad3f5;clip-path:polygon(0 0,100% 50%,0 100%)"></div>
<div class="b" style="left:645px;top:2013px;width:15px;height:33px;background:#cad3f5;"></div>
<div class="b" style="left:645px;top:2013px;width:15px;height:33px;background:#1e2030;clip-path:polygon(0 0,100% 50%,0 100%)"></div>
<div class="b" style="left:660px;top:2013px;width:180px;height:33px;background:#cad3f5;"></div>
<div class="r " style="top:2013px;left:660px"><span class="dk"> &lt;</span><span class="B re">n</span><span class="dk">&gt;</span><span class="B dk"> RESIZE </span></div>
<div class="b" style="left:840px;top:2013px;width:15px;height:33px;background:#1e2030;"></div>
<div class="b" style="left:840px;top:2013px;width:15px;height:33px;background:#cad3f5;clip-path:polygon(0 0,100% 50%,0 100%)"></div>
<div class="b" style="left:855px;top:2013px;width:15px;height:33px;background:#cad3f5;"></div>
<div class="b" style="left:855px;top:2013px;width:15px;height:33px;background:#1e2030;clip-path:polygon(0 0,100% 50%,0 100%)"></div>
<div class="b" style="left:870px;top:2013px;width:150px;height:33px;background:#cad3f5;"></div>
<div class="r " style="top:2013px;left:870px"><span class="dk"> &lt;</span><span class="B re">h</span><span class="dk">&gt;</span><span class="B dk"> MOVE </span></div>
<div class="b" style="left:1020px;top:2013px;width:15px;height:33px;background:#1e2030;"></div>
<div class="b" style="left:1020px;top:2013px;width:15px;height:33px;background:#cad3f5;clip-path:polygon(0 0,100% 50%,0 100%)"></div>
<div class="b" style="left:1035px;top:2013px;width:15px;height:33px;background:#cad3f5;"></div>
<div class="b" style="left:1035px;top:2013px;width:15px;height:33px;background:#1e2030;clip-path:polygon(0 0,100% 50%,0 100%)"></div>
<div class="b" style="left:1050px;top:2013px;width:180px;height:33px;background:#cad3f5;"></div>
<div class="r " style="top:2013px;left:1050px"><span class="dk"> &lt;</span><span class="B re">s</span><span class="dk">&gt;</span><span class="B dk"> SEARCH </span></div>
<div class="b" style="left:1230px;top:2013px;width:15px;height:33px;background:#1e2030;"></div>
<div class="b" style="left:1230px;top:2013px;width:15px;height:33px;background:#cad3f5;clip-path:polygon(0 0,100% 50%,0 100%)"></div>
<div class="b" style="left:1245px;top:2013px;width:15px;height:33px;background:#cad3f5;"></div>
<div class="b" style="left:1245px;top:2013px;width:15px;height:33px;background:#1e2030;clip-path:polygon(0 0,100% 50%,0 100%)"></div>
<div class="b" style="left:1260px;top:2013px;width:195px;height:33px;background:#cad3f5;"></div>
<div class="r " style="top:2013px;left:1260px"><span class="dk"> &lt;</span><span class="B re">o</span><span class="dk">&gt;</span><span class="B dk"> SESSION </span></div>
<div class="b" style="left:1455px;top:2013px;width:15px;height:33px;background:#1e2030;"></div>
<div class="b" style="left:1455px;top:2013px;width:15px;height:33px;background:#cad3f5;clip-path:polygon(0 0,100% 50%,0 100%)"></div>
<div class="b" style="left:1470px;top:2013px;width:15px;height:33px;background:#cad3f5;"></div>
<div class="b" style="left:1470px;top:2013px;width:15px;height:33px;background:#1e2030;clip-path:polygon(0 0,100% 50%,0 100%)"></div>
<div class="b" style="left:1485px;top:2013px;width:150px;height:33px;background:#cad3f5;"></div>
<div class="r " style="top:2013px;left:1485px"><span class="dk"> &lt;</span><span class="B re">q</span><span class="dk">&gt;</span><span class="B dk"> QUIT </span></div>
<div class="b" style="left:1635px;top:2013px;width:15px;height:33px;background:#1e2030;"></div>
<div class="b" style="left:1635px;top:2013px;width:15px;height:33px;background:#cad3f5;clip-path:polygon(0 0,100% 50%,0 100%)"></div>
<div class="r " style="top:2013px;left:2865px"><span class="B pe">Alt +</span></div>
<div class="b" style="left:2955px;top:2013px;width:15px;height:33px;background:#cad3f5;"></div>
<div class="b" style="left:2955px;top:2013px;width:15px;height:33px;background:#1e2030;clip-path:polygon(0 0,100% 50%,0 100%)"></div>
<div class="b" style="left:2970px;top:2013px;width:210px;height:33px;background:#cad3f5;"></div>
<div class="r " style="top:2013px;left:2970px"><span class="dk"> &lt;</span><span class="B re">n</span><span class="dk">&gt;</span><span class="B dk"> New Pane </span></div>
<div class="b" style="left:3180px;top:2013px;width:15px;height:33px;background:#1e2030;"></div>
<div class="b" style="left:3180px;top:2013px;width:15px;height:33px;background:#cad3f5;clip-path:polygon(0 0,100% 50%,0 100%)"></div>
<div class="b" style="left:3195px;top:2013px;width:15px;height:33px;background:#cad3f5;"></div>
<div class="b" style="left:3195px;top:2013px;width:15px;height:33px;background:#1e2030;clip-path:polygon(0 0,100% 50%,0 100%)"></div>
<div class="b" style="left:3210px;top:2013px;width:315px;height:33px;background:#cad3f5;"></div>
<div class="r " style="top:2013px;left:3210px"><span class="dk"> &lt;</span><span class="re ah">←</span><span class="re av">↓</span><span class="re av">↑</span><span class="re ah">→</span><span class="dk">&gt;</span><span class="B dk"> Change Focus </span></div>
<div class="b" style="left:3525px;top:2013px;width:15px;height:33px;background:#1e2030;"></div>
<div class="b" style="left:3525px;top:2013px;width:15px;height:33px;background:#cad3f5;clip-path:polygon(0 0,100% 50%,0 100%)"></div>
<div class="b" style="left:3540px;top:2013px;width:15px;height:33px;background:#cad3f5;"></div>
<div class="b" style="left:3540px;top:2013px;width:15px;height:33px;background:#1e2030;clip-path:polygon(0 0,100% 50%,0 100%)"></div>
<div class="b" style="left:3555px;top:2013px;width:210px;height:33px;background:#cad3f5;"></div>
<div class="r " style="top:2013px;left:3555px"><span class="dk"> &lt;</span><span class="B re">f</span><span class="dk">&gt;</span><span class="B dk"> Floating </span></div>
<div class="b" style="left:3765px;top:2013px;width:15px;height:33px;background:#1e2030;"></div>
<div class="b" style="left:3765px;top:2013px;width:15px;height:33px;background:#cad3f5;clip-path:polygon(0 0,100% 50%,0 100%)"></div>
</div>
</body></html>
